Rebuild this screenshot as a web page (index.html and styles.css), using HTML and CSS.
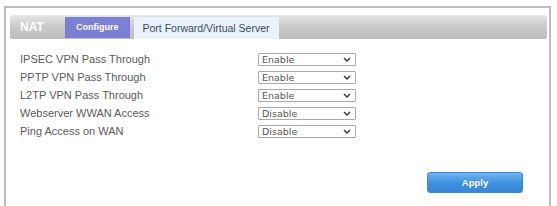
FILE: index.html
```html
<!DOCTYPE html>
<html lang="en">

<head>
  <link rel="stylesheet" href="styles.css">
  <meta charset="UTF-8">
  <meta name="viewport" content="width=device-width, initial-scale=1.0">
  <title>NAT</title>
</head>

<body>

<div class="panel">
  <div class="tab-bar">
    <span class="tab-title">NAT</span>
    <span class="tab active">Configure</span>
    <span class="tab">Port Forward/Virtual Server</span>
  </div>

  <div class="settings">
    <label class="row-label" for="ipsec">IPSEC VPN Pass Through</label>
    <span class="select-wrap">
      <select id="ipsec" class="choice">
        <option selected>Enable</option>
        <option>Disable</option>
      </select>
      <svg class="chevron" width="8" height="5" viewBox="0 0 8 5"><path d="M1 1l3 3 3-3" fill="none" stroke="#333" stroke-width="1.4"/></svg>
    </span>

    <label class="row-label" for="pptp">PPTP VPN Pass Through</label>
    <span class="select-wrap">
      <select id="pptp" class="choice">
        <option selected>Enable</option>
        <option>Disable</option>
      </select>
      <svg class="chevron" width="8" height="5" viewBox="0 0 8 5"><path d="M1 1l3 3 3-3" fill="none" stroke="#333" stroke-width="1.4"/></svg>
    </span>

    <label class="row-label" for="l2tp">L2TP VPN Pass Through</label>
    <span class="select-wrap">
      <select id="l2tp" class="choice">
        <option selected>Enable</option>
        <option>Disable</option>
      </select>
      <svg class="chevron" width="8" height="5" viewBox="0 0 8 5"><path d="M1 1l3 3 3-3" fill="none" stroke="#333" stroke-width="1.4"/></svg>
    </span>

    <label class="row-label" for="webserver">Webserver WWAN Access</label>
    <span class="select-wrap">
      <select id="webserver" class="choice">
        <option>Enable</option>
        <option selected>Disable</option>
      </select>
      <svg class="chevron" width="8" height="5" viewBox="0 0 8 5"><path d="M1 1l3 3 3-3" fill="none" stroke="#333" stroke-width="1.4"/></svg>
    </span>

    <label class="row-label" for="ping">Ping Access on WAN</label>
    <span class="select-wrap">
      <select id="ping" class="choice">
        <option>Enable</option>
        <option selected>Disable</option>
      </select>
      <svg class="chevron" width="8" height="5" viewBox="0 0 8 5"><path d="M1 1l3 3 3-3" fill="none" stroke="#333" stroke-width="1.4"/></svg>
    </span>
  </div>

  <div class="actions">
    <button class="apply">Apply</button>
  </div>
</div>

</body>

</html>
```

FILE: styles.css
```css
body {
  margin: 0;
  font-family: "Liberation Sans", Arial, sans-serif;
  background: #fff;
}

.panel {
  margin: 6px 0 0 4px;
  width: 547px;
  height: 210px;
  border: 2px solid #bdbdbd;
  border-bottom: none;
  box-sizing: border-box;
  padding: 7px 2px 0 4px;
}

.tab-bar {
  display: flex;
  align-items: flex-end;
  height: 24px;
  padding-left: 10px;
  background: linear-gradient(#e6e6e6, #cbcbcb 45%, #bdbdbd);
  border-radius: 2px;
}

.tab-title {
  color: #fff;
  font-weight: bold;
  font-size: 12px;
  line-height: 22px;
  align-self: center;
  width: 45px;
}

.tab {
  height: 22px;
  line-height: 22px;
  padding: 0 9px;
  font-size: 10.5px;
  color: #3c4a5a;
  background: #eaf3fb;
  margin-right: 4px;
}

.tab.active {
  background: #7c80d4;
  color: #fff;
  font-weight: bold;
  font-size: 9px;
  padding: 0 11px;
  height: 21px;
  line-height: 21px;
  margin-bottom: 1px;
}

.settings {
  display: grid;
  grid-template-columns: 238px 98px;
  row-gap: 3px;
  padding: 12px 0 0 10px;
  align-items: center;
}

.row-label {
  font-size: 11px;
  color: #5a5a5a;
}

.select-wrap {
  position: relative;
  display: block;
  height: 13px;
  margin-top: 2px;
}

.choice {
  appearance: none;
  display: block;
  width: 98px;
  height: 13px;
  font-size: 9.5px;
  line-height: 11px;
  font-family: "DejaVu Sans", sans-serif;
  color: #555;
  background: #fff;
  border: 1px solid #aaa;
  border-radius: 1px;
  padding: 0 3px;
  margin: 0;
}

.chevron {
  position: absolute;
  right: 5px;
  top: 4px;
  pointer-events: none;
}

.actions {
  display: flex;
  justify-content: flex-end;
  padding: 34px 24px 0 0;
}

.apply {
  width: 96px;
  height: 21px;
  border: 1px solid #3f86cf;
  border-radius: 3px;
  background: linear-gradient(#71b4f0, #3d8fe0 55%, #3a86d6);
  color: #fff;
  font-weight: bold;
  font-size: 9.5px;
  font-family: "Liberation Sans", Arial, sans-serif;
}
```
